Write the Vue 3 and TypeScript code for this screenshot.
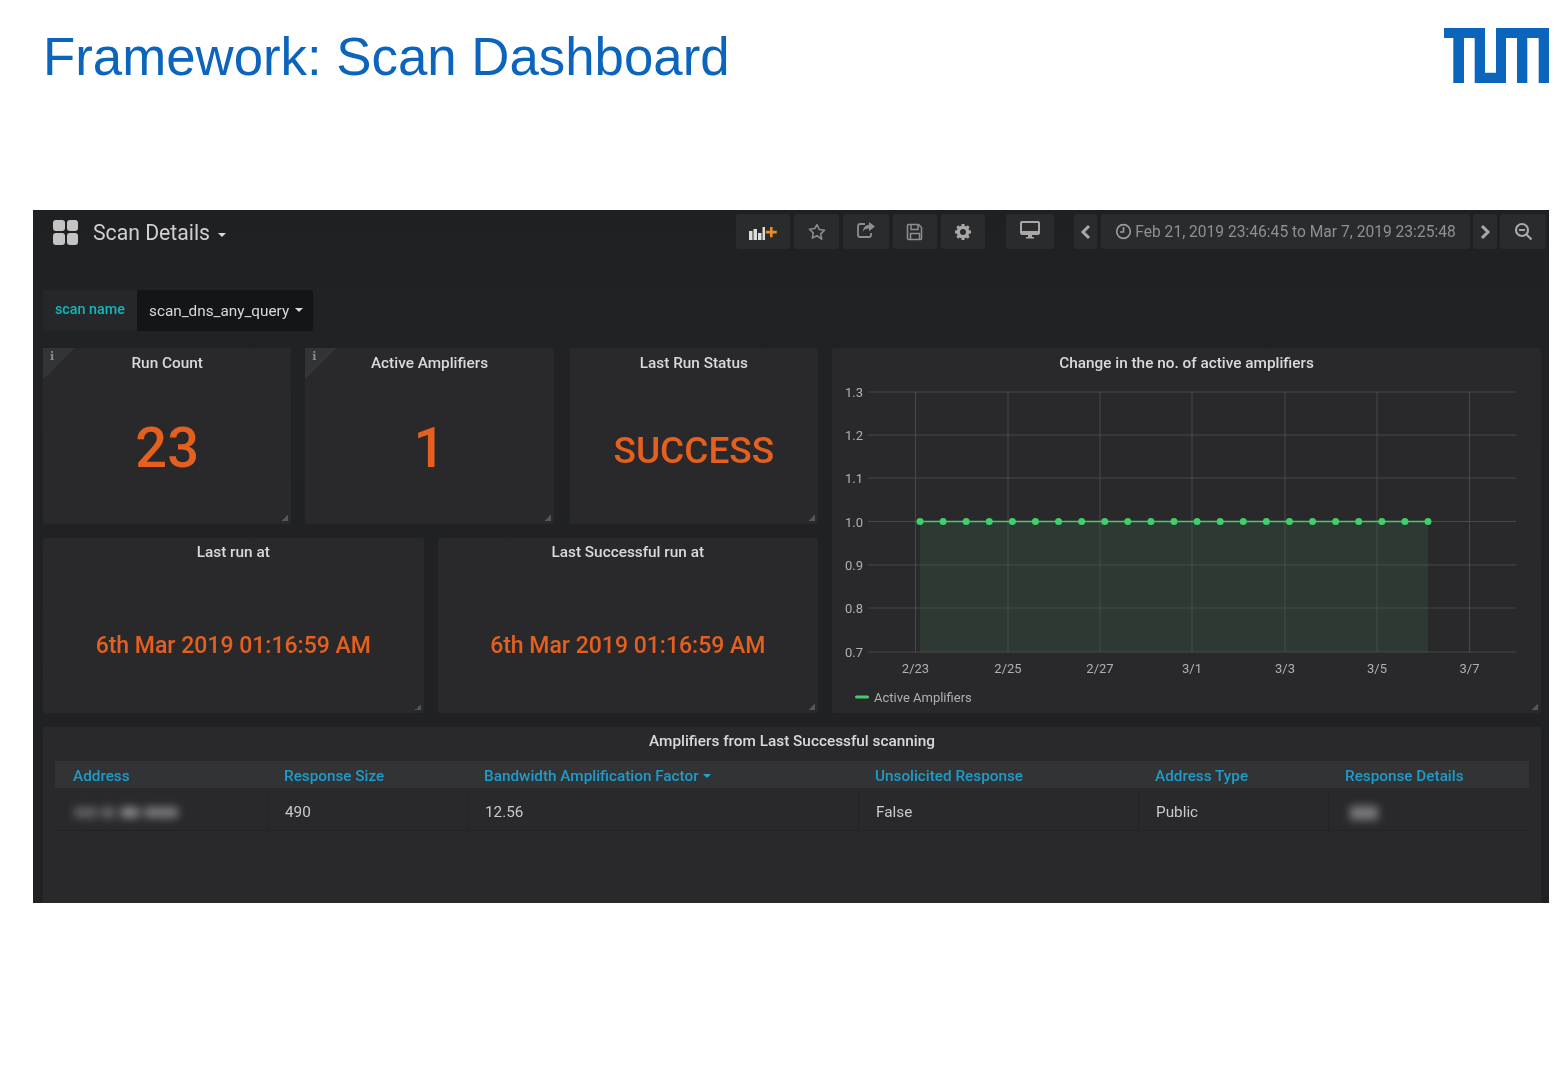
<script setup lang="ts">
// ── Chart geometry (viewBox uses the same numbers as the screenshot) ──────────
const yTicks = [
  { label: '1.3', y: 392 },
  { label: '1.2', y: 435 },
  { label: '1.1', y: 478 },
  { label: '1.0', y: 521.5 },
  { label: '0.9', y: 565 },
  { label: '0.8', y: 608 },
  { label: '0.7', y: 652 },
]
const xTicks = [
  { label: '2/23', x: 915.5 },
  { label: '2/25', x: 1008 },
  { label: '2/27', x: 1100 },
  { label: '3/1', x: 1192 },
  { label: '3/3', x: 1285 },
  { label: '3/5', x: 1377 },
  { label: '3/7', x: 1469.5 },
]
const points = Array.from({ length: 23 }, (_, i) => 920 + i * (508 / 22))

// ── Panels ────────────────────────────────────────────────────────────────────
const stats = [
  { title: 'Run Count', value: '23', info: true, big: true },
  { title: 'Active Amplifiers', value: '1', info: true, big: true },
  { title: 'Last Run Status', value: 'SUCCESS', info: false, big: false },
]
const dates = [
  { title: 'Last run at', value: '6th Mar 2019 01:16:59 AM' },
  { title: 'Last Successful run at', value: '6th Mar 2019 01:16:59 AM' },
]
const columns = ['Address', 'Response Size', 'Bandwidth Amplification Factor', 'Unsolicited Response', 'Address Type', 'Response Details']
</script>

<template>
  <div class="page">
    <header class="slide-head">
      <h1>Framework: Scan Dashboard</h1>
      <svg class="tum" viewBox="0 0 105 55" aria-label="TUM">
        <path d="M0 0H41V44.7H52V0H105V55H94.7V10H83.3V55H73V10H62V55H30.7V10H20V55H9.3V10H0Z" fill="#0b65bd" />
      </svg>
    </header>

    <section class="dash">
      <nav class="topbar">
        <div class="brand">
          <span class="brand-grid"><i /><i /><i /><i /></span>
          <span class="brand-name">Scan Details</span>
          <span class="caret caret-brand" />
        </div>
        <div class="tools">
          <button class="tool w54">
            <svg width="30" height="18" viewBox="0 0 30 18">
              <path d="M1 8h3.500v9H1zM5.500 6H9v11H5.500zM10 10h3.500v7H10zM14.500 4H17v13h-2.500z" fill="#dcdcdc" />
              <path d="M22 4h2.600v3.800h4.200v2.600h-4.200v3.800H22v-3.800h-4.200V7.800H22z" fill="#f08a24" />
            </svg>
          </button>
          <button class="tool w45">
            <svg width="18" height="18" viewBox="0 0 18 18">
              <path d="M9 1.600l2.300 4.900 5.300.7-3.900 3.700 1 5.300L9 12.600l-4.700 2.600 1-5.300-3.900-3.700 5.300-.7z" fill="none" stroke="#8e8e8e" stroke-width="1.500" stroke-linejoin="round" />
            </svg>
          </button>
          <button class="tool w46 lift">
            <svg width="20" height="18" viewBox="0 0 20 18">
              <path d="M9 3H4a2 2 0 0 0-2 2v9a2 2 0 0 0 2 2h9a2 2 0 0 0 2-2v-2" fill="none" stroke="#8e8e8e" stroke-width="1.800" />
              <path d="M13 1l6 4.600-6 4.600V7.500c-3 0-5 .8-6.200 3.400C7 7 9.200 4 13 3.800z" fill="#8e8e8e" />
            </svg>
          </button>
          <button class="tool w44">
            <svg width="18" height="18" viewBox="0 0 18 18">
              <path d="M2.500 1.500h10l3 3v11a1 1 0 0 1-1 1h-12a1 1 0 0 1-1-1v-13a1 1 0 0 1 1-1z" fill="none" stroke="#8e8e8e" stroke-width="1.500" />
              <path d="M5 2v4.500h7V2M4.500 16v-5.500h9V16" fill="none" stroke="#8e8e8e" stroke-width="1.500" />
            </svg>
          </button>
          <button class="tool w44">
            <svg width="18" height="18" viewBox="0 0 18 18">
              <circle cx="9" cy="9" r="4.700" fill="none" stroke="#a8a8a8" stroke-width="3.400" />
              <path d="M9 1v3M9 14v3M1 9h3M14 9h3M3.300 3.300l2.200 2.200M12.500 12.500l2.200 2.200M14.700 3.300l-2.200 2.200M5.500 12.500l-2.200 2.200" stroke="#a8a8a8" stroke-width="3" />
            </svg>
          </button>
          <button class="tool w48 gap-l lift">
            <svg width="22" height="20" viewBox="0 0 22 20">
              <path d="M1 3a2 2 0 0 1 2-2h16a2 2 0 0 1 2 2v10a2 2 0 0 1-2 2H3a2 2 0 0 1-2-2z" fill="#a8a8a8" />
              <path d="M3 3h16v8H3z" fill="#2b2c2e" />
              <path d="M9 15h4v2h2v1.500H7V17h2z" fill="#a8a8a8" />
            </svg>
          </button>
          <button class="tool w23 gap-m">
            <svg width="11" height="16" viewBox="0 0 11 16"><path d="M9 2L3 8l6 6" fill="none" stroke="#a8a8a8" stroke-width="3" /></svg>
          </button>
          <button class="tool range">
            <svg width="17" height="17" viewBox="0 0 17 17">
              <circle cx="8.500" cy="8.500" r="6.800" fill="none" stroke="#9a9a9a" stroke-width="1.700" />
              <path d="M8.500 4v5H5" fill="none" stroke="#9a9a9a" stroke-width="1.600" />
            </svg>
            Feb 21, 2019 23:46:45 to Mar 7, 2019 23:25:48
          </button>
          <button class="tool w24 tight">
            <svg width="11" height="16" viewBox="0 0 11 16"><path d="M2 2l6 6-6 6" fill="none" stroke="#a8a8a8" stroke-width="3" /></svg>
          </button>
          <button class="tool w46 tight">
            <svg width="19" height="19" viewBox="0 0 19 19">
              <circle cx="8" cy="8" r="6" fill="none" stroke="#a8a8a8" stroke-width="2.200" />
              <path d="M5 8h6M12.500 12.500l5 5" stroke="#a8a8a8" stroke-width="2.200" />
            </svg>
          </button>
        </div>
      </nav>

      <div class="vars">
        <span class="var-label">scan name</span>
        <span class="var-value">scan_dns_any_query <span class="caret caret-var" /></span>
      </div>

      <div class="panels">
        <div class="left-col">
          <div class="stat-row">
            <article v-for="s in stats" :key="s.title" class="panel stat">
              <span v-if="s.info" class="corner"><b>i</b></span>
              <h2>{{ s.title }}</h2>
              <div class="stat-body">
                <span :class="s.big ? 'val-big' : 'val-word'">{{ s.value }}</span>
              </div>
              <span class="grip" />
            </article>
          </div>
          <div class="date-row">
            <article v-for="d in dates" :key="d.title" class="panel stat date">
              <h2>{{ d.title }}</h2>
              <div class="stat-body">
                <span class="val-date">{{ d.value }}</span>
              </div>
              <span class="grip" />
            </article>
          </div>
        </div>

        <article class="panel chart">
          <h2>Change in the no. of active amplifiers</h2>
          <svg class="chart-svg" viewBox="832 378 709 335">
            <line v-for="t in yTicks" :key="t.label" x1="868" x2="1516" :y1="t.y" :y2="t.y" stroke="#48494b" />
            <line v-for="t in xTicks" :key="t.label" :x1="t.x" :x2="t.x" y1="392" y2="652" stroke="#48494b" />
            <rect x="920" y="521.500" width="508" height="130.500" fill="#3d5a45" opacity=".35" />
            <line x1="920" x2="1428" y1="521.500" y2="521.500" stroke="#49c96c" stroke-width="1.500" />
            <circle v-for="p in points" :key="p" :cx="p" cy="521.500" r="3.500" fill="#41cf6c" />
            <text v-for="t in yTicks" :key="t.label" class="tick" x="845" :y="t.y + 5">{{ t.label }}</text>
            <text v-for="t in xTicks" :key="t.label" class="tick" :x="t.x" y="673" text-anchor="middle">{{ t.label }}</text>
            <rect x="855" y="695.500" width="14" height="3" rx="1.500" fill="#41cf6c" />
            <text class="tick" x="874" y="702">Active Amplifiers</text>
          </svg>
          <span class="grip" />
        </article>
      </div>

      <article class="panel table-panel">
        <h2>Amplifiers from Last Successful scanning</h2>
        <div class="tbl">
          <div class="tbl-head">
            <span v-for="c in columns" :key="c">
              {{ c }}<span v-if="c.startsWith('Bandwidth')" class="caret caret-blue" />
            </span>
          </div>
          <div class="tbl-row">
            <span><i class="redact redact-addr" /></span>
            <span>490</span>
            <span>12.56</span>
            <span>False</span>
            <span>Public</span>
            <span><i class="redact redact-detail" /></span>
          </div>
        </div>
      </article>
    </section>
  </div>
</template>

<style scoped>
.page {
  height: 1091px;
  overflow: hidden;
  background: #fff;
  font-family: Roboto, "Liberation Sans", sans-serif;
}

/* Slide header */
.slide-head {
  height: 210px;
  box-sizing: border-box;
  padding: 28px 15px 0 43px;
  display: flex;
  justify-content: space-between;
  align-items: flex-start;
}
.slide-head h1 {
  margin: 0;
  font: 400 52.800px/58px "Liberation Sans", Arial, sans-serif;
  color: #0b65bd;
}
.tum {
  width: 105px;
  height: 55px;
}

/* Dashboard */
.dash {
  height: 693px;
  margin: 0 15px 0 33px;
  box-sizing: border-box;
  overflow: hidden;
  background: linear-gradient(#1f2022, #212224 90px, #202123);
  color: #d8d9da;
  filter: blur(.5px);
}
.topbar {
  height: 71px;
  box-sizing: border-box;
  padding: 4px 3px 0 20px;
  display: flex;
  justify-content: space-between;
  align-items: flex-start;
}
.brand {
  display: flex;
  align-items: center;
  height: 36px;
}
.brand-grid {
  width: 25px;
  height: 25px;
  display: grid;
  grid-template-columns: 1fr 1fr;
  gap: 2px;
  margin-right: 15px;
}
.brand-grid i {
  background: #c4c4c4;
  border-radius: 3px;
}
.brand-name {
  font-size: 21.200px;
  color: #cfcfd0;
}
.caret {
  display: inline-block;
  vertical-align: middle;
  border: 4px solid transparent;
  border-top-color: #d8d9da;
  border-bottom: 0;
  margin-left: 2px;
}
.caret-brand {
  margin: 5px 0 0 8px;
}
.caret-var {
  margin-top: -3px;
}
.caret-blue {
  border-top-color: #1fa5d8;
  margin: -2px 0 0 4px;
}
.tools {
  display: flex;
  gap: 4px;
}
.tool {
  height: 35px;
  padding: 0;
  border: 0;
  border-radius: 3px;
  background: #2a2b2d;
  display: flex;
  align-items: center;
  justify-content: center;
}
.lift svg { margin-top: -3px; }
.w23 { width: 23px; }
.w24 { width: 24px; }
.w44 { width: 44px; }
.w45 { width: 45px; }
.w46 { width: 46px; }
.w48 { width: 48px; }
.w54 { width: 54px; }
.gap-l { margin-left: 17px; }
.gap-m { margin-left: 16px; }
.tight { margin-left: -1px; }
.range {
  width: 369px;
  gap: 3px;
  font: 400 15.600px Roboto, sans-serif;
  color: #8f9092;
}

/* Template variable */
.vars {
  display: flex;
  height: 41px;
  margin: 9px 0 0 10px;
  font-size: 14px;
}
.var-label {
  width: 94px;
  box-sizing: border-box;
  padding-left: 12px;
  line-height: 39px;
  font-size: 14.300px;
  font-weight: 500;
  color: #12b8b8;
  background: #26272a;
  border-radius: 3px 0 0 3px;
}
.var-value {
  width: 176px;
  box-sizing: border-box;
  padding-left: 12px;
  line-height: 43px;
  font-size: 15.300px;
  color: #d8d9da;
  background: #141517;
  border-radius: 0 3px 3px 0;
}

/* Panels */
.panels {
  display: flex;
  gap: 14px;
  margin: 17px 8px 0 10px;
  height: 365px;
}
.panel {
  position: relative;
  background: #29292b;
  border-radius: 2px;
}
.panel h2 {
  margin: 0;
  padding-top: 5px;
  font-size: 15.350px;
  line-height: 20px;
  font-weight: 500;
  text-align: center;
  color: #d8d9da;
}
.panel.date h2 {
  padding-top: 4px;
}
.left-col {
  width: 775px;
  display: flex;
  flex-direction: column;
  gap: 14px;
}
.stat-row,
.date-row {
  flex: 1;
  display: flex;
  gap: 14px;
}
.stat {
  flex: 1;
  display: flex;
  flex-direction: column;
}
.stat-row .stat:last-child {
  margin-left: 2px;
}
.stat-body {
  flex: 1;
  display: flex;
  align-items: center;
  justify-content: center;
  padding-bottom: 26px;
  box-sizing: border-box;
  color: #e5601f;
}
.val-big {
  font-size: 56px;
  font-weight: 500;
  line-height: 1;
  margin-top: 25px;
}
.val-word {
  font-size: 37px;
  font-weight: 500;
  margin-top: 31px;
}
.val-date {
  font-size: 23px;
  font-weight: 500;
  margin-top: 43px;
}
.corner {
  position: absolute;
  top: 0;
  left: 0;
  width: 32px;
  height: 32px;
  background: linear-gradient(135deg, #333436 50%, transparent 50%);
}
.corner b {
  position: absolute;
  top: 2px;
  left: 7px;
  font: 700 11px "DejaVu Serif", serif;
  color: #8f8f90;
}
.grip {
  position: absolute;
  right: 3px;
  bottom: 3px;
  width: 6px;
  height: 6px;
  background: linear-gradient(135deg, transparent 50%, #55565a 50%);
}

/* Chart */
.chart {
  flex: 1;
  min-width: 0;
}
.chart-svg {
  position: absolute;
  left: 0;
  top: 30px;
  width: 709px;
  height: 335px;
  display: block;
}
.tick {
  font: 400 13px Roboto, sans-serif;
  fill: #b0b0b1;
}

/* Table */
.table-panel {
  margin: 14px 8px 0 10px;
  height: 190px;
  padding: 0 12px;
}
.table-panel h2 {
  padding: 4px 0 0;
  height: 30px;
}
.tbl-head,
.tbl-row {
  display: grid;
}
.tbl-head {
  grid-template-columns: 211px 200px 391px 280px 190px 1fr;
  height: 27px;
  background: #323335;
  font-size: 15.300px;
  line-height: 31px;
  font-weight: 500;
  color: #1d9ccb;
}
.tbl-head > span {
  padding-left: 18px;
}
.tbl-row {
  grid-template-columns: 213px 200px 391px 280px 190px 1fr;
  height: 40px;
  margin-top: 2px;
  border-bottom: 1px solid #232325;
  font-size: 15.300px;
  line-height: 44px;
  color: #c8c9ca;
}
.tbl-row > span {
  padding-left: 17px;
  border-right: 1px solid #232325;
}
.tbl-row > span:last-child {
  border-right: 0;
}
.redact {
  display: inline-block;
  background: #77787a;
  filter: blur(4px);
  vertical-align: middle;
}
.redact-addr {
  width: 104px;
  height: 11px;
  margin-left: 2px;
  background: linear-gradient(90deg, #5d5e60 0 22%, #2f3032 22% 27%, #66676a 27% 38%, #2f3032 38% 45%, #85868a 45% 62%, #3a3b3d 62% 68%, #77787a 68%);
}
.redact-detail {
  width: 28px;
  height: 14px;
  margin-left: 4px;
}
</style>

<style>
html,
body {
  margin: 0;
  background: #fff;
}
</style>
